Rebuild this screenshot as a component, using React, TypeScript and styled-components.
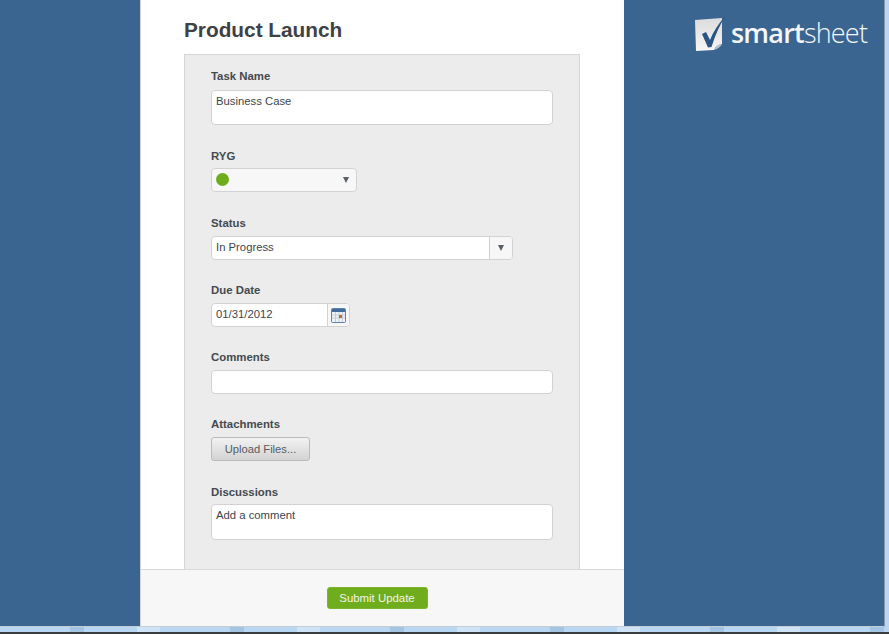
import React from 'react';
import styled, { createGlobalStyle } from 'styled-components';

const GlobalStyle = createGlobalStyle`
  html, body {
    margin: 0;
    padding: 0;
    background: #2b2b2b;
  }
  body {
    font-family: "Liberation Sans", Arial, sans-serif;
    font-size: 11.3px;
    color: #444;
  }
`;

const Screen = styled.div`
  width: 889px;
  height: 634px;
  overflow: hidden;
  display: flex;
  flex-direction: column;
`;

const WindowRow = styled.div`
  display: flex;
  height: 632px;
  background:
    repeating-linear-gradient(90deg, transparent 0 70px, #a3c4e2 70px 84px, transparent 84px 137px, #cfe4f6 137px 160px),
    #b9d7f2;
`;

const Viewport = styled.div`
  width: 885px;
  height: 627px;
  display: flex;
  background: #3a6591;
  border-right: 1px solid #8d9aa8;
  border-bottom: 1px solid #c4ccd4;
  box-sizing: border-box;
`;

const Panel = styled.main`
  width: 484px;
  height: 100%;
  margin-left: 140px;
  box-sizing: border-box;
  border-left: 1px solid #d4d4d4;
  background: #fff;
  display: flex;
  flex-direction: column;
`;

const Title = styled.h1`
  margin: 0;
  padding: 18px 0 0 43px;
  height: 54px;
  box-sizing: border-box;
  font-size: 20.8px;
  line-height: 23px;
  font-weight: 700;
  color: #3f4245;
`;

const FormBox = styled.form`
  width: 396px;
  height: 515px;
  margin-left: 43px;
  padding: 14px 26px 0;
  box-sizing: border-box;
  flex: none;
  background: #ececec;
  border: 1px solid #d6d6d6;
  border-bottom: none;
`;

const Field = styled.div<{ $gap: number }>`
  margin-bottom: ${(p) => p.$gap}px;
`;

const Label = styled.div<{ $gap?: number }>`
  height: 14px;
  line-height: 14px;
  font-size: 11.4px;
  font-weight: 700;
  color: #444a50;
  margin-bottom: ${(p) => p.$gap ?? 6}px;
`;

const TextBox = styled.div<{ $h: number; $w?: number }>`
  width: ${(p) => p.$w ?? 342}px;
  height: ${(p) => p.$h}px;
  box-sizing: border-box;
  padding: 3px 4px;
  background: #fff;
  border: 1px solid #d2d2d2;
  border-radius: 4px;
  line-height: 14px;
  color: #3c4650;
`;

const RygSelect = styled.div`
  width: 146px;
  height: 24px;
  box-sizing: border-box;
  padding: 0 6px 0 4px;
  display: flex;
  align-items: center;
  justify-content: space-between;
  background: #f7f7f7;
  border: 1px solid #d2d2d2;
  border-radius: 4px;
`;

const Dot = styled.span`
  width: 13px;
  height: 13px;
  margin-top: -1px;
  border-radius: 50%;
  background: #6fac1c;
`;

const Arrow = styled.span`
  width: 0;
  height: 0;
  margin-right: 1px;
  border-left: 3.5px solid transparent;
  border-right: 3.5px solid transparent;
  border-top: 6px solid #5a6068;
`;

const ComboBox = styled.div<{ $w: number }>`
  width: ${(p) => p.$w}px;
  height: 24px;
  box-sizing: border-box;
  display: flex;
  background: #fff;
  border: 1px solid #d2d2d2;
  border-radius: 4px;
  overflow: hidden;
  color: #3c4650;
  line-height: 21px;
`;

const ComboText = styled.div`
  flex: 1;
  padding-left: 4px;
`;

const ComboSide = styled.div<{ $w: number }>`
  width: ${(p) => p.$w}px;
  flex: none;
  display: flex;
  align-items: center;
  justify-content: center;
  background: #f7f7f7;
  border-left: 1px solid #d2d2d2;
`;

const UploadButton = styled.button`
  display: block;
  width: 99px;
  height: 24px;
  padding: 0;
  background: linear-gradient(#f2f2f2, #d3d3d3);
  border: 1px solid #b9bcbf;
  border-radius: 3px;
  font-family: inherit;
  font-size: 11.2px;
  color: #585c60;
`;

const Footer = styled.footer`
  flex: 1;
  display: flex;
  justify-content: center;
  align-items: flex-start;
  padding: 17px 11px 0 0;
  background: #f7f7f7;
  border-top: 1px solid #d8d8d8;
`;

const SubmitButton = styled.button`
  width: 101px;
  height: 22px;
  padding: 0;
  background: #70ad1d;
  border: 1px solid #7ab52c;
  border-radius: 3px;
  font-family: inherit;
  font-size: 11.4px;
  color: #f4f4e8;
`;

const Brand = styled.div`
  display: flex;
  align-items: flex-start;
  margin: 14px 0 0 71px;
  height: 38px;
`;

const BrandName = styled.div`
  margin: 2px 0 0 4px;
  font-family: "Open Sans", sans-serif;
  font-size: 27px;
  line-height: 34px;
  letter-spacing: -0.8px;
  font-weight: 300;
  color: #f4f6f8;

  b {
    font-weight: 600;
  }
`;

const RightEdge = styled.div`
  flex: 1;
  height: 627px;
  background: #b9d7f2;
`;

const BottomBar = styled.div`
  flex: 1;
  background: #3a3d40;
`;

const LogoMark = () => (
  <svg width="32" height="38" viewBox="0 0 32 38">
    <defs>
      <linearGradient id="sheet" x1="0" y1="0" x2="0" y2="1">
        <stop offset="0" stopColor="#dcdcdc" />
        <stop offset="1" stopColor="#f6f6f6" />
      </linearGradient>
    </defs>
    <path d="M0 6 L27 4 L27 30 Q21 31 19 36 L1 37 Z" fill="url(#sheet)" />
    <path d="M19 36 Q21 31 27 30 Q25 34 19 36 Z" fill="#b9c2cc" />
    <path
      d="M7 20 L11 18 L15 26 Q19 15 31 1 Q22 15 16.5 33 L13 33.5 Z"
      fill="#2a5484"
    />
  </svg>
);

const CalendarIcon = () => (
  <svg width="15" height="15" viewBox="0 0 15 15">
    <rect x="0.5" y="0.5" width="14" height="14" rx="1" fill="#eef1f5" stroke="#5d83ab" />
    <rect x="1" y="1" width="13" height="3" fill="#3f6c9c" />
    <path d="M1 7h13M1 10h13M4.5 4v10M8 4v10M11.5 4v10" stroke="#c6ced8" strokeWidth="1" fill="none" />
    <rect x="8" y="7" width="3" height="3" fill="#b5703a" />
  </svg>
);

export default function App() {
  return (
    <Screen>
      <GlobalStyle />
      <WindowRow>
        <Viewport>
          <Panel>
            <Title>Product Launch</Title>
            <FormBox>
              <Field $gap={24}>
                <Label $gap={7}>Task Name</Label>
                <TextBox $h={35}>Business Case</TextBox>
              </Field>
              <Field $gap={24}>
                <Label $gap={5}>RYG</Label>
                <RygSelect>
                  <Dot />
                  <Arrow />
                </RygSelect>
              </Field>
              <Field $gap={23}>
                <Label>Status</Label>
                <ComboBox $w={302}>
                  <ComboText>In Progress</ComboText>
                  <ComboSide $w={22}>
                    <Arrow />
                  </ComboSide>
                </ComboBox>
              </Field>
              <Field $gap={23}>
                <Label>Due Date</Label>
                <ComboBox $w={139}>
                  <ComboText>01/31/2012</ComboText>
                  <ComboSide $w={21}>
                    <CalendarIcon />
                  </ComboSide>
                </ComboBox>
              </Field>
              <Field $gap={23}>
                <Label>Comments</Label>
                <TextBox $h={24} />
              </Field>
              <Field $gap={24}>
                <Label>Attachments</Label>
                <UploadButton type="button">Upload Files...</UploadButton>
              </Field>
              <Field $gap={0}>
                <Label $gap={5}>Discussions</Label>
                <TextBox $h={36}>Add a comment</TextBox>
              </Field>
            </FormBox>
            <Footer>
              <SubmitButton type="button">Submit Update</SubmitButton>
            </Footer>
          </Panel>
          <Brand>
            <LogoMark />
            <BrandName>
              <b>smart</b>sheet
            </BrandName>
          </Brand>
        </Viewport>
        <RightEdge />
      </WindowRow>
      <BottomBar />
    </Screen>
  );
}
